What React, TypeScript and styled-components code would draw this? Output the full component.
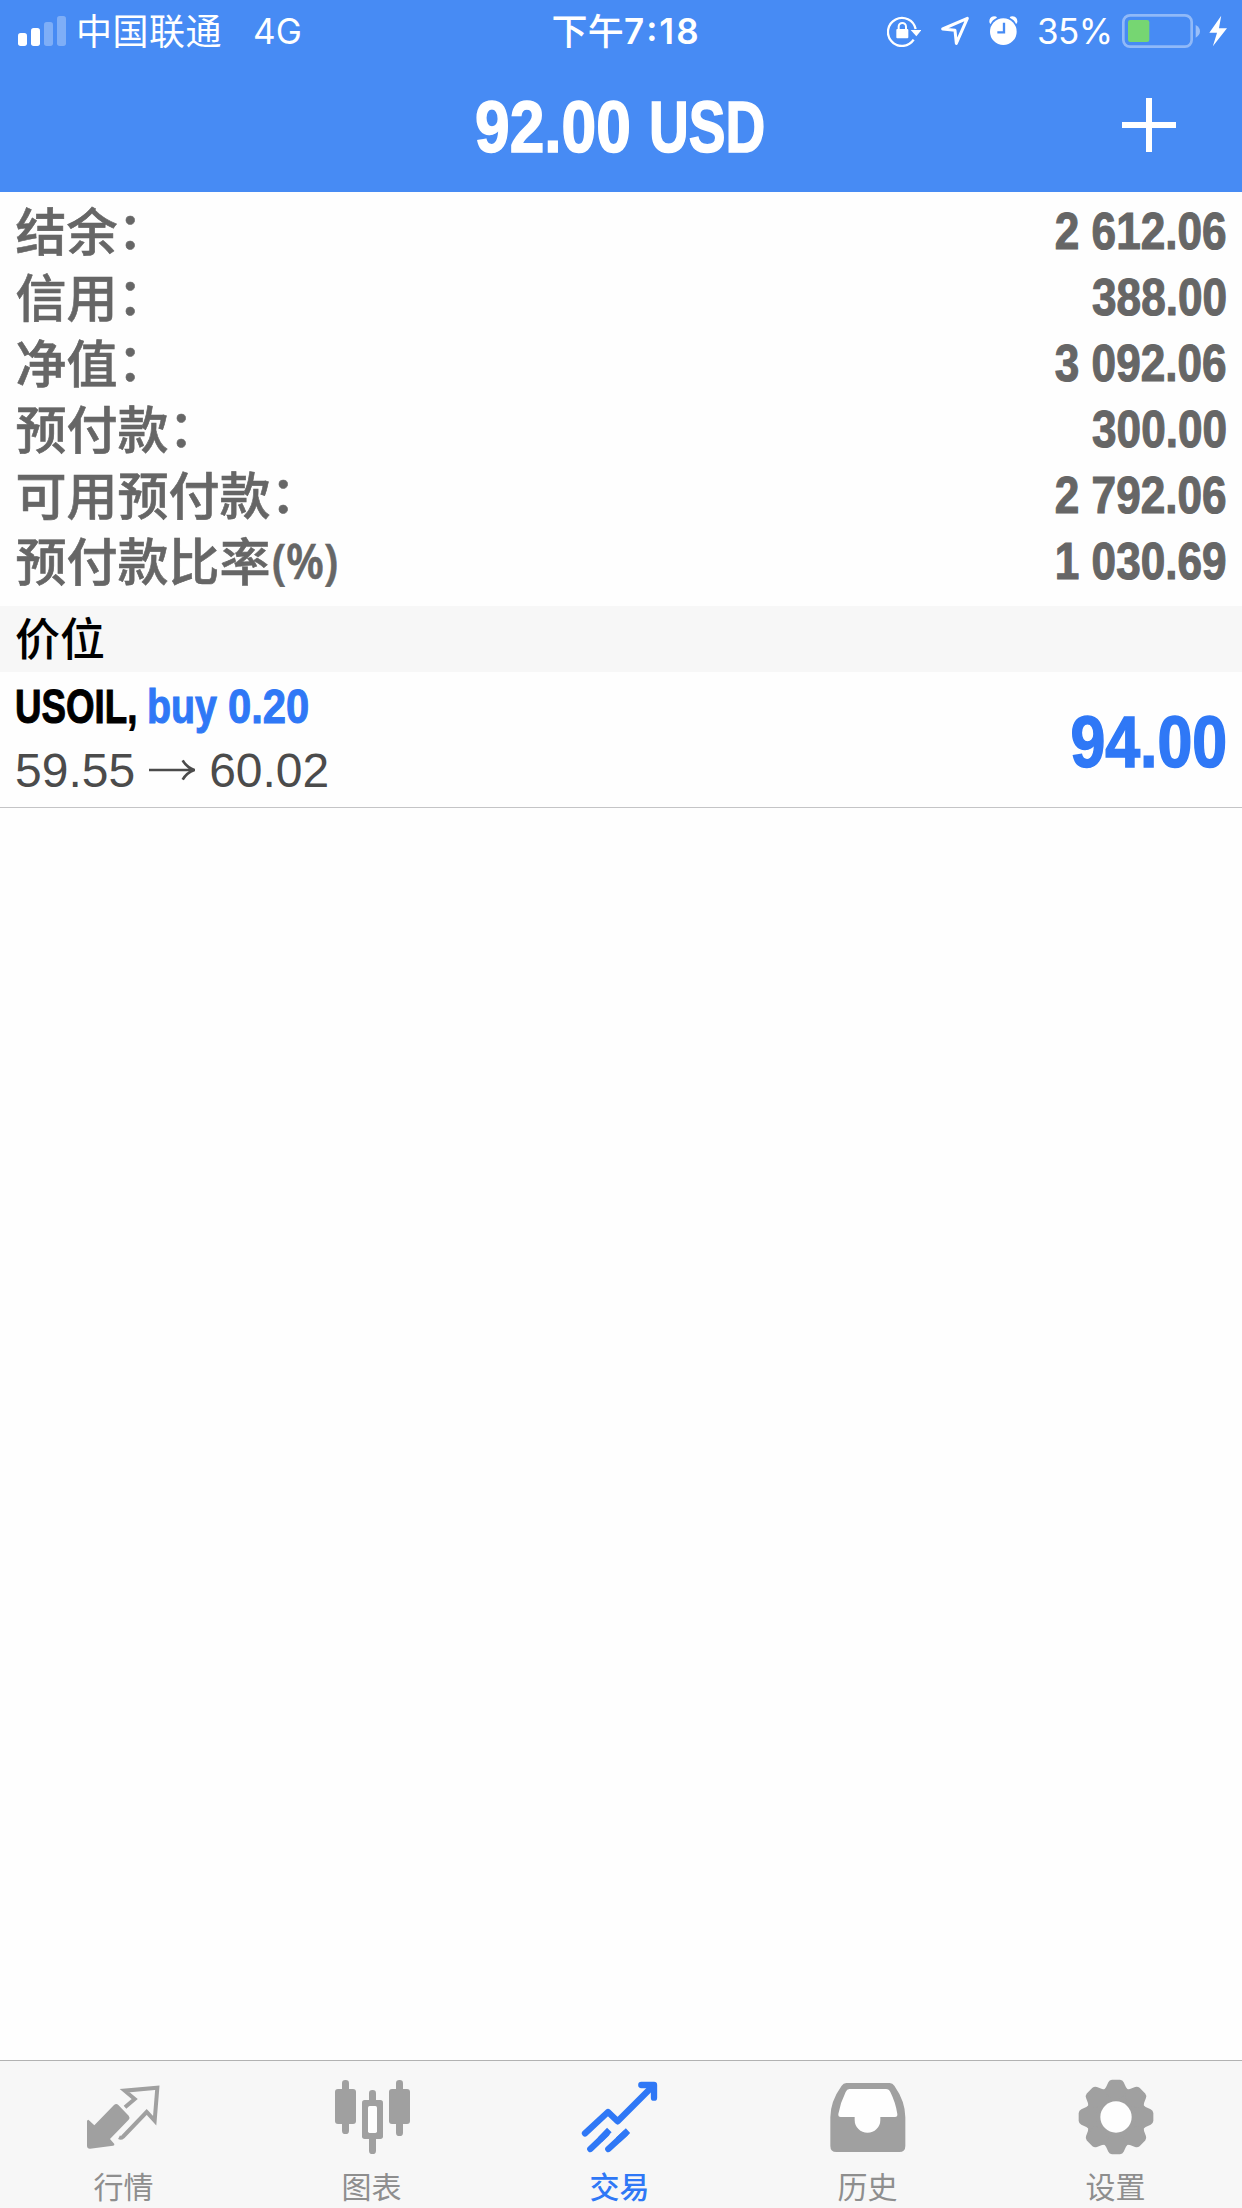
import React from "react";
import styled, { createGlobalStyle } from "styled-components";

const blue = "#478bf4";
const accent = "#2f78f6";
const grey = "#a0a0a0";

const Global = createGlobalStyle`
  * { box-sizing: border-box; }
  body { margin: 0; background: #fefefe; }
`;

const Screen = styled.div`
  display: flex;
  flex-direction: column;
  width: 1242px;
  height: 2208px;
  overflow: hidden;
  background: #fefefe;
  font-family: "Liberation Sans", "Noto Sans CJK SC", sans-serif;
`;

const Header = styled.header`
  display: flex;
  flex-direction: column;
  height: 192px;
  flex: none;
  background: ${blue};
  color: #fff;
`;

const StatusBar = styled.div`
  display: grid;
  grid-template-columns: 1fr auto 1fr;
  align-items: center;
  height: 62px;
  font-family: Inter, "Noto Sans CJK SC", sans-serif;
  font-size: 35px;
  line-height: 62px;
`;

const StatusLeft = styled.div`
  display: flex;
  align-items: center;
  height: 62px;
  padding-left: 18px;
`;

const StatusRight = styled.div`
  display: flex;
  align-items: center;
  justify-content: flex-end;
  height: 62px;
  padding-right: 15px;
`;

const Carrier = styled.span`
  margin: -4px 0 0 10px;
  font-family: "Noto Sans CJK SC", sans-serif;
  font-size: 36px;
  letter-spacing: 0.5px;
  font-weight: 400;
`;

const Network = styled.span`
  margin-left: 31px;
`;

const Clock = styled.div`
  display: flex;
  align-items: center;
  padding-left: 10px;
  font-weight: 600;
  letter-spacing: 2px;
`;

const Meridiem = styled.span`
  margin-top: -4px;
  font-family: "Noto Sans CJK SC", sans-serif;
  font-weight: 500;
  font-size: 36px;
  letter-spacing: 0.3px;
`;

const ClockColon = styled.span`
  margin-top: -6px;
`;

const Percent = styled.span`
  width: 72px;
  margin: 0 13px 0 19px;
  white-space: nowrap;
  letter-spacing: -0.6px;
`;

const NavBar = styled.div`
  display: grid;
  grid-template-columns: 1fr auto 1fr;
  align-items: center;
  height: 130px;
`;

const Title = styled.h1`
  grid-column: 2;
  display: flex;
  gap: 20px;
  margin: 0;
  padding-right: 5px;
`;

const AddButton = styled.button`
  justify-self: end;
  width: 54px;
  height: 54px;
  margin: 0 66px 4px 0;
  padding: 0;
  border: 0;
  background: none;
  color: inherit;
`;

const Run = styled.span<{ $w: number; $right?: boolean }>`
  display: flex;
  justify-content: ${(p) => (p.$right ? "flex-end" : "flex-start")};
  width: ${(p) => p.$w}px;
`;

const Face = styled.span<{ $size: number; $scale: number; $right?: boolean }>`
  flex: none;
  font-size: ${(p) => p.$size}px;
  line-height: 1.15;
  font-weight: 700;
  white-space: pre;
  -webkit-text-stroke: ${(p) => p.$size * 0.022}px currentColor;
  transform: scaleX(${(p) => p.$scale});
  transform-origin: ${(p) => (p.$right ? "right" : "left")} center;
`;

type CondensedProps = { size: number; scale: number; width: number; right?: boolean; children: React.ReactNode };

/* Bold grotesque set at a condensed width. */
const Condensed = ({ size, scale, width, right, children }: CondensedProps) => (
  <Run $w={width} $right={right}>
    <Face $size={size} $scale={scale} $right={right}>
      {children}
    </Face>
  </Run>
);

const Summary = styled.section`
  display: flex;
  flex-direction: column;
  height: 414px;
  flex: none;
  padding: 7px 15px 0 15.5px;
  color: #666;
`;

const SummaryRow = styled.div`
  display: flex;
  justify-content: space-between;
  align-items: center;
  height: 66px;
`;

const Label = styled.span`
  display: flex;
  height: 66px;
  margin-top: -7px;
  font-family: "Noto Sans CJK SC", sans-serif;
  font-size: 51px;
  line-height: 66px;
  font-weight: 500;
  -webkit-text-stroke: 0.6px currentColor;
`;

const Colon = styled.span`
  margin-top: -2px;
`;

const Unit = styled.span`
  margin: 1px 0 0 1px;
  font-family: "Noto Sans", sans-serif;
  font-size: 49px;
  font-weight: 600;
  transform: scaleX(0.885);
  transform-origin: left center;
`;

const SectionTitle = styled.h2`
  height: 66px;
  flex: none;
  margin: 0;
  padding-left: 15px;
  background: #f7f7f7;
  color: #000;
  font-family: "Noto Sans CJK SC", sans-serif;
  font-size: 45px;
  line-height: 62px;
  font-weight: 500;
`;

const Position = styled.div`
  display: flex;
  justify-content: space-between;
  align-items: center;
  height: 136px;
  flex: none;
  padding: 0 15px 0 15px;
  border-bottom: 1px solid #c4c4c6;
`;

const PositionInfo = styled.div`
  display: flex;
  flex-direction: column;
  padding-bottom: 2px;
`;

const Symbol = styled.div`
  display: flex;
  height: 63px;
  align-items: center;
  color: #000;
`;

const Side = styled.span`
  display: flex;
  gap: 12px;
  color: ${accent};
`;

const Prices = styled.div`
  display: flex;
  align-items: center;
  height: 63px;
  color: #4b4b4b;
  font-size: 48px;
  line-height: 63px;
`;

const Profit = styled.div`
  padding-top: 5px;
  color: ${accent};
`;

const TabBar = styled.nav`
  display: grid;
  grid-template-columns: repeat(5, 248px);
  height: 148px;
  flex: none;
  margin-top: auto;
  border-top: 1px solid #b2b2b2;
  background: #f7f7f7;
`;

const Tab = styled.div<{ $active?: boolean }>`
  display: flex;
  flex-direction: column;
  align-items: center;
  padding-top: 16px;
  color: ${(p) => (p.$active ? accent : grey)};
`;

const TabLabel = styled.span<{ $active?: boolean }>`
  margin: 6px 1px 0 0;
  color: ${(p) => (p.$active ? accent : "#8e8e8e")};
  font-family: "Noto Sans CJK SC", sans-serif;
  font-size: 30px;
  line-height: 44px;
  font-weight: ${(p) => (p.$active ? 500 : 400)};
`;

const Signal = () => (
  <svg width="48" height="30" viewBox="54 45 144 90" fill="currentColor">
    <rect x="54" y="96" width="27" height="39" rx="8" />
    <rect x="93" y="81" width="27" height="54" rx="8" />
    <rect x="132" y="63" width="27" height="72" rx="8" opacity="0.3" />
    <rect x="171" y="45" width="27" height="90" rx="8" opacity="0.3" />
  </svg>
);

const RotationLock = () => (
  <svg width="34" height="32" viewBox="140 42 102 96" fill="none" stroke="currentColor">
    <path d="M220 116A42 42 0 1 1 226 84" strokeWidth="7" />
    <path d="M211 87h32l-15 19z" fill="currentColor" stroke="none" />
    <rect x="168" y="84" width="36" height="28" rx="3" fill="currentColor" stroke="none" />
    <path d="M175 86v-9a11 11 0 0 1 22 0v9" strokeWidth="6" />
  </svg>
);

const Location = () => (
  <svg width="28" height="30" viewBox="301 48 84 90" fill="none" stroke="currentColor" strokeWidth="9" strokeLinejoin="round">
    <path d="M306 87L380 55L347 130L343 91Z" />
  </svg>
);

const Alarm = () => (
  <svg width="29" height="30" viewBox="446 46 87 90" fill="currentColor">
    <circle cx="489" cy="93" r="40" />
    <path d="M447 64q-1-15 14-17q8 0 9 4q-14 6-19 19q-3-1-4-6z" />
    <path d="M531 64q1-15-14-17q-8 0-9 4q14 6 19 19q3-1 4-6z" />
    <path d="M491 66v29h-20" fill="none" stroke={blue} strokeWidth="7" />
  </svg>
);

const Battery = () => (
  <svg width="78" height="34" viewBox="846 39 234 102" fill="none">
    <rect x="850" y="43" width="205" height="94" rx="20" stroke="#fff" strokeOpacity="0.4" strokeWidth="8" />
    <rect x="864" y="57" width="64" height="66" rx="7" fill="#76d672" />
    <path d="M1067 72q13 7 13 19t-13 19z" fill="#fff" fillOpacity="0.45" />
  </svg>
);

const Bolt = () => (
  <svg width="18" height="32" viewBox="1106 43 56 97" fill="currentColor">
    <path d="M1144 44L1107 97h24L1118 139L1162 83h-25z" />
  </svg>
);

const Plus = () => (
  <svg width="54" height="54" viewBox="0 0 54 54" stroke="currentColor" strokeWidth="6">
    <path d="M0 27H54M27 0V54" />
  </svg>
);

const Arrow = () => (
  <svg width="46" height="22" viewBox="447 503 138 66" fill="none" stroke="currentColor" strokeWidth="8">
    <path d="M447 536H578M548 507Q560 528 583 536Q560 544 548 565" />
  </svg>
);

const QuotesIcon = () => (
  <svg width="80" height="80" viewBox="252 87 240 240" fill="currentColor">
    <path d="M342 171q7-6 13 0l31 32q5 6 0 12l-56 58l13 15q1 5-4 5l-69 9q-9 0-9-9v-73q1-6 5-4l17 16z" />
    <path d="M375 178L404 153L374 128L472 119L464 218L440 192L369 266Q363 271 357 268" fill="none" stroke="currentColor" strokeWidth="12" />
  </svg>
);

const ChartIcon = () => (
  <svg width="80" height="80" viewBox="996 87 240 240" fill="currentColor">
    <rect x="1026" y="96" width="21" height="162" rx="10" />
    <rect x="1005" y="123" width="63" height="105" rx="9" />
    <rect x="1188" y="96" width="21" height="168" rx="10" />
    <rect x="1167" y="123" width="63" height="105" rx="9" />
    <rect x="1107" y="126" width="21" height="192" rx="10" />
    <rect x="1086" y="156" width="63" height="117" rx="8" />
    <rect x="1104" y="174" width="27" height="81" rx="5" fill="#fefefe" />
  </svg>
);

const TradeIcon = () => (
  <svg width="80" height="80" viewBox="420 87 240 240" fill="none" stroke="currentColor" strokeWidth="19" strokeLinecap="round" strokeLinejoin="round">
    <path d="M435 256L504 192L533 220L638 115" />
    <path d="M604 111H642V149" />
    <path d="M451 303L499 257M505 303L556 256" />
    <path d="M480 275L508 246M534 276L564 248" strokeLinecap="butt" />
  </svg>
);

const HistoryIcon = () => (
  <svg width="80" height="80" viewBox="83 87 240 240" fill="currentColor">
    <path d="M138 105H268Q277 105 282 113Q315 160 315 208V294Q315 312 297 312H108Q90 312 90 294V208Q90 160 124 113Q129 105 138 105Z" />
    <path d="M147 123H257Q266 123 270 132Q286 164 291 198Q292 207 284 207H240V216A38 38 0 0 1 163 216V207H121Q113 207 114 198Q120 164 136 132Q140 123 147 123Z" fill="#fefefe" />
  </svg>
);

const SettingsIcon = () => (
  <svg width="80" height="80" viewBox="829 88 240 240" fill="currentColor">
    <circle cx="949" cy="208" r="84" />
    {[0, 45, 90, 135, 180, 225, 270, 315].map((angle) => (
      <path key={angle} transform={`rotate(${angle} 949 208)`} d="M937 96H961Q969 97 972 104L979 119Q983 127 992 130L949 160L906 130Q915 127 919 119L926 104Q929 97 937 96Z" />
    ))}
    <circle cx="949" cy="208" r="47" fill="#fefefe" />
  </svg>
);

const rows = [
  { label: "结余", colon: true, value: "2 612.06" },
  { label: "信用", colon: true, value: "388.00" },
  { label: "净值", colon: true, value: "3 092.06" },
  { label: "预付款", colon: true, value: "300.00" },
  { label: "可用预付款", colon: true, value: "2 792.06" },
  { label: "预付款比率", colon: false, value: "1 030.69" },
];

const tabs = [
  { label: "行情", icon: <QuotesIcon /> },
  { label: "图表", icon: <ChartIcon /> },
  { label: "交易", icon: <TradeIcon />, active: true },
  { label: "历史", icon: <HistoryIcon /> },
  { label: "设置", icon: <SettingsIcon /> },
];

const IconGroup = styled.div`
  display: flex;
  align-items: center;
  gap: 20px;
`;

const BoltSlot = styled.span`
  display: flex;
  margin-left: 9px;
`;

const PriceArrow = styled.span`
  display: flex;
  margin: 0 14px 0 14px;
`;

export default function App() {
  return (
    <Screen>
      <Global />
      <Header>
        <StatusBar>
          <StatusLeft>
            <Signal />
            <Carrier>中国联通</Carrier>
            <Network>4G</Network>
          </StatusLeft>
          <Clock>
            <Meridiem>下午</Meridiem>7<ClockColon>:</ClockColon>18
          </Clock>
          <StatusRight>
            <IconGroup>
              <RotationLock />
              <Location />
              <Alarm />
            </IconGroup>
            <Percent>35%</Percent>
            <Battery />
            <BoltSlot>
              <Bolt />
            </BoltSlot>
          </StatusRight>
        </StatusBar>
        <NavBar>
          <Title>
            <Condensed size={72} scale={0.865} width={154}>92.00</Condensed>
            <Condensed size={72} scale={0.765} width={114}>USD</Condensed>
          </Title>
          <AddButton aria-label="+">
            <Plus />
          </AddButton>
        </NavBar>
      </Header>
      <Summary>
        {rows.map((row) => (
          <SummaryRow key={row.label}>
            <Label>
              {row.label}
              {row.colon ? <Colon>：</Colon> : <Unit>(%)</Unit>}
            </Label>
            <Condensed size={51} scale={0.865} width={180} right>
              {row.value}
            </Condensed>
          </SummaryRow>
        ))}
      </Summary>
      <SectionTitle>价位</SectionTitle>
      <Position>
        <PositionInfo>
          <Symbol>
            <Condensed size={48} scale={0.765} width={132}>USOIL,</Condensed>
            <Side>
              <Condensed size={48} scale={0.82} width={69}>buy</Condensed>
              <Condensed size={48} scale={0.87} width={82}>0.20</Condensed>
            </Side>
          </Symbol>
          <Prices>
            59.55
            <PriceArrow>
              <Arrow />
            </PriceArrow>
            60.02
          </Prices>
        </PositionInfo>
        <Profit>
          <Condensed size={72} scale={0.87} width={157} right>94.00</Condensed>
        </Profit>
      </Position>
      <TabBar>
        {tabs.map((tab) => (
          <Tab key={tab.label} $active={tab.active}>
            {tab.icon}
            <TabLabel $active={tab.active}>{tab.label}</TabLabel>
          </Tab>
        ))}
      </TabBar>
    </Screen>
  );
}
